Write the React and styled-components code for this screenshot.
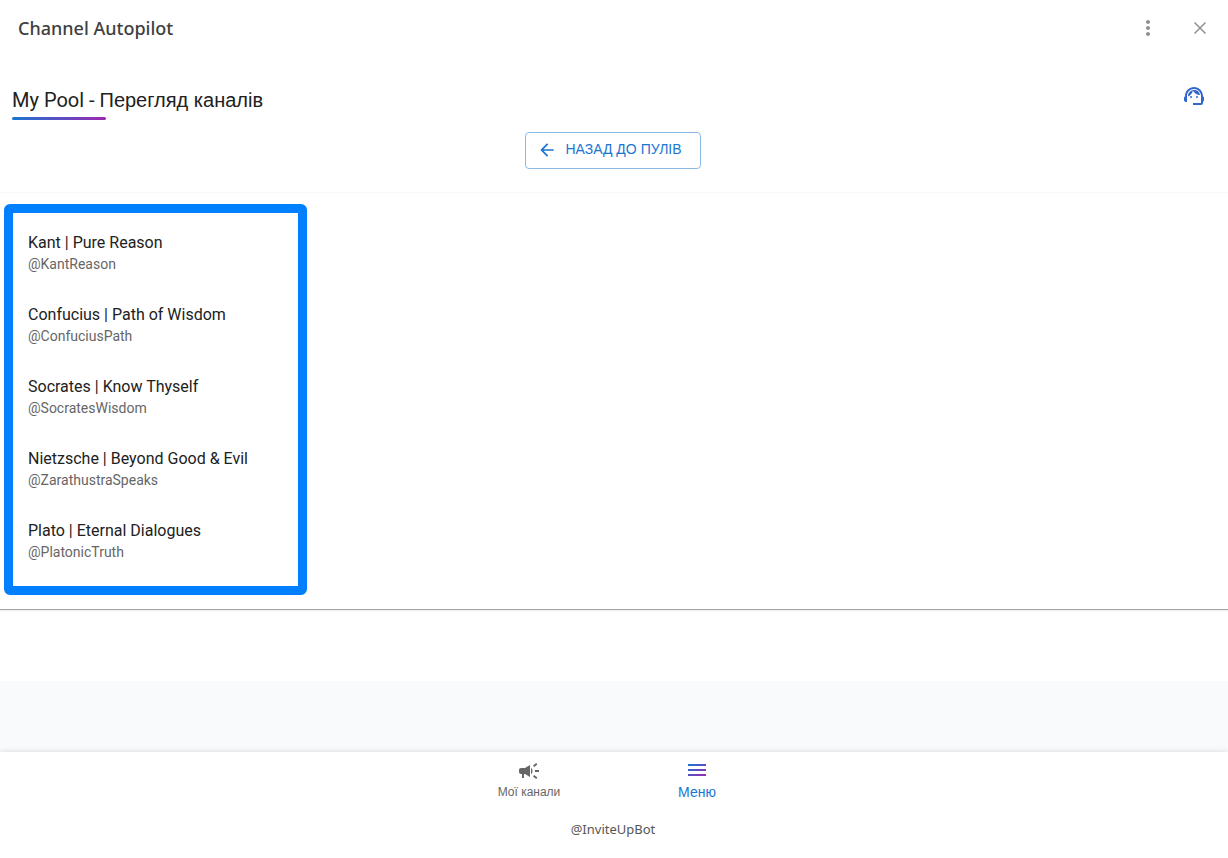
import { useState } from 'react';
import styled, { createGlobalStyle } from 'styled-components';
import { MdArrowBack, MdCampaign, MdMenu, MdMoreVert, MdSupportAgent } from 'react-icons/md';

const GlobalStyle = createGlobalStyle`
  * {
    box-sizing: border-box;
  }

  body {
    margin: 0;
    background: #fff;
    color: #212121;
    font-family: Roboto, "Liberation Sans", sans-serif;
  }

  button {
    font: inherit;
    cursor: pointer;
  }
`;

const Page = styled.div`
  display: flex;
  flex-direction: column;
  min-height: 100vh;
  background: #f9fafc;
`;

const TitleBar = styled.header`
  display: flex;
  align-items: center;
  justify-content: space-between;
  height: 56px;
  padding: 0 16px 0 18px;
  background: #fff;
`;

const AppName = styled.span`
  color: #404040;
  font-family: "Noto Sans", sans-serif;
  font-size: 18px;
  font-weight: 500;
  line-height: 24px;
`;

const WindowActions = styled.div`
  display: flex;
  gap: 28px;
`;

const IconButton = styled.button`
  display: flex;
  padding: 0;
  border: none;
  background: none;
  color: #919191;
`;

const Main = styled.main`
  padding-bottom: 71px;
  background: #fff;
`;

const PoolHeader = styled.div`
  padding: 28px 2px 23px 0;
  border-bottom: 1px solid #f8f8f8;
`;

const HeadingRow = styled.div`
  display: flex;
  align-items: flex-start;
  justify-content: space-between;
  padding: 0 20px 0 12px;
`;

const Heading = styled.h1`
  margin: 0;
  font-size: 20px;
  font-weight: 400;
  line-height: 33px;

  &::after {
    content: "";
    display: block;
    width: 94px;
    height: 3px;
    border-radius: 2px;
    background: linear-gradient(90deg, #1976d2, #9c27b0);
  }
`;

const Cyrillic = styled.span`
  font-family: "Liberation Sans", sans-serif;
`;

const BackButton = styled.button`
  display: flex;
  align-items: center;
  gap: 8px;
  height: 37px;
  margin: 12px auto 0;
  padding: 0 18px 2px 11px;
  border: 1px solid #8cbae8;
  border-radius: 4px;
  background: #fff;
  color: #1976d2;
`;

const BackLabel = styled(Cyrillic)`
  padding-bottom: 2px;
  font-size: 14px;
  line-height: 20px;
  text-transform: uppercase;
`;

const ListArea = styled.section`
  padding: 11px 4px 14px;
  border-bottom: 1px solid #a6a6a6;
  box-shadow: 0 1px 1px #eee;
`;

const ChannelList = styled.ul`
  width: fit-content;
  min-width: 303px;
  margin: 0;
  padding: 3px 15px 10px;
  border: 9px solid #0080ff;
  border-radius: 6px;
  list-style: none;
`;

const Channel = styled.li`
  padding: 15px 0;
`;

const ChannelName = styled.div`
  font-size: 16px;
  line-height: 24px;
`;

const ChannelHandle = styled.div`
  color: #666;
  font-size: 14px;
  line-height: 18px;
`;

const BottomBar = styled.footer`
  margin-top: auto;
  padding: 0 2px 19px 0;
  background: #fff;
  box-shadow: 0 -1px 5px rgba(0, 0, 0, 0.1);
`;

const Nav = styled.nav`
  display: flex;
  justify-content: center;
  height: 56px;
`;

const NavButton = styled.button`
  display: flex;
  flex: 0 1 168px;
  flex-direction: column;
  align-items: center;
  justify-content: center;
  padding: 0 12px;
  border: none;
  background: none;
  color: ${({ $active }) => ($active ? '#1976d2' : '#666')};
  font-size: ${({ $active }) => ($active ? 14 : 12)}px;
  line-height: ${({ $active }) => ($active ? 20 : 18)}px;
`;

const BotName = styled.div`
  margin-top: 11px;
  color: #555;
  font-family: "Noto Sans", sans-serif;
  font-size: 13px;
  line-height: 20px;
  text-align: center;
`;

const channels = [
  { name: 'Kant | Pure Reason', handle: '@KantReason' },
  { name: 'Confucius | Path of Wisdom', handle: '@ConfuciusPath' },
  { name: 'Socrates | Know Thyself', handle: '@SocratesWisdom' },
  { name: 'Nietzsche | Beyond Good & Evil', handle: '@ZarathustraSpeaks' },
  { name: 'Plato | Eternal Dialogues', handle: '@PlatonicTruth' },
];

const tabs = [
  { id: 'channels', label: 'Мої канали', icon: MdCampaign },
  { id: 'menu', label: 'Меню', icon: MdMenu },
];

const GradientDefs = styled.svg`
  position: absolute;
`;

function IconGradients() {
  return (
    <GradientDefs width="0" height="0" aria-hidden="true">
      <defs>
        <linearGradient id="menu-gradient" x1="0" y1="0" x2="1" y2="1">
          <stop offset="0" stopColor="#1976d2" />
          <stop offset="1" stopColor="#9c27b0" />
        </linearGradient>
      </defs>
    </GradientDefs>
  );
}

export default function App() {
  const [tab, setTab] = useState('menu');

  return (
    <Page>
      <GlobalStyle />
      <IconGradients />
      <TitleBar>
        <AppName>Channel Autopilot</AppName>
        <WindowActions>
          <IconButton type="button" aria-label="More">
            <MdMoreVert size={24} />
          </IconButton>
          <IconButton type="button" aria-label="Close">
            <svg width="24" height="24" fill="none" stroke="currentColor" strokeWidth="1.5">
              <path d="M6.5 6.5l11 11M17.5 6.5l-11 11" />
            </svg>
          </IconButton>
        </WindowActions>
      </TitleBar>

      <Main>
        <PoolHeader>
          <HeadingRow>
            <Heading>
              My Pool - <Cyrillic>Перегляд каналів</Cyrillic>
            </Heading>
            <IconButton type="button" aria-label="Support">
              <MdSupportAgent size={24} color="#3366cc" />
            </IconButton>
          </HeadingRow>
          <BackButton type="button">
            <MdArrowBack size={20} />
            <BackLabel>Назад до пулів</BackLabel>
          </BackButton>
        </PoolHeader>

        <ListArea>
          <ChannelList>
            {channels.map(({ name, handle }) => (
              <Channel key={handle}>
                <ChannelName>{name}</ChannelName>
                <ChannelHandle>{handle}</ChannelHandle>
              </Channel>
            ))}
          </ChannelList>
        </ListArea>
      </Main>

      <BottomBar>
        <Nav>
          {tabs.map(({ id, label, icon: Icon }) => (
            <NavButton key={id} type="button" $active={tab === id} onClick={() => setTab(id)}>
              <Icon size={24} fill={tab === id ? 'url(#menu-gradient)' : 'currentColor'} />
              <Cyrillic>{label}</Cyrillic>
            </NavButton>
          ))}
        </Nav>
        <BotName>@InviteUpBot</BotName>
      </BottomBar>
    </Page>
  );
}
